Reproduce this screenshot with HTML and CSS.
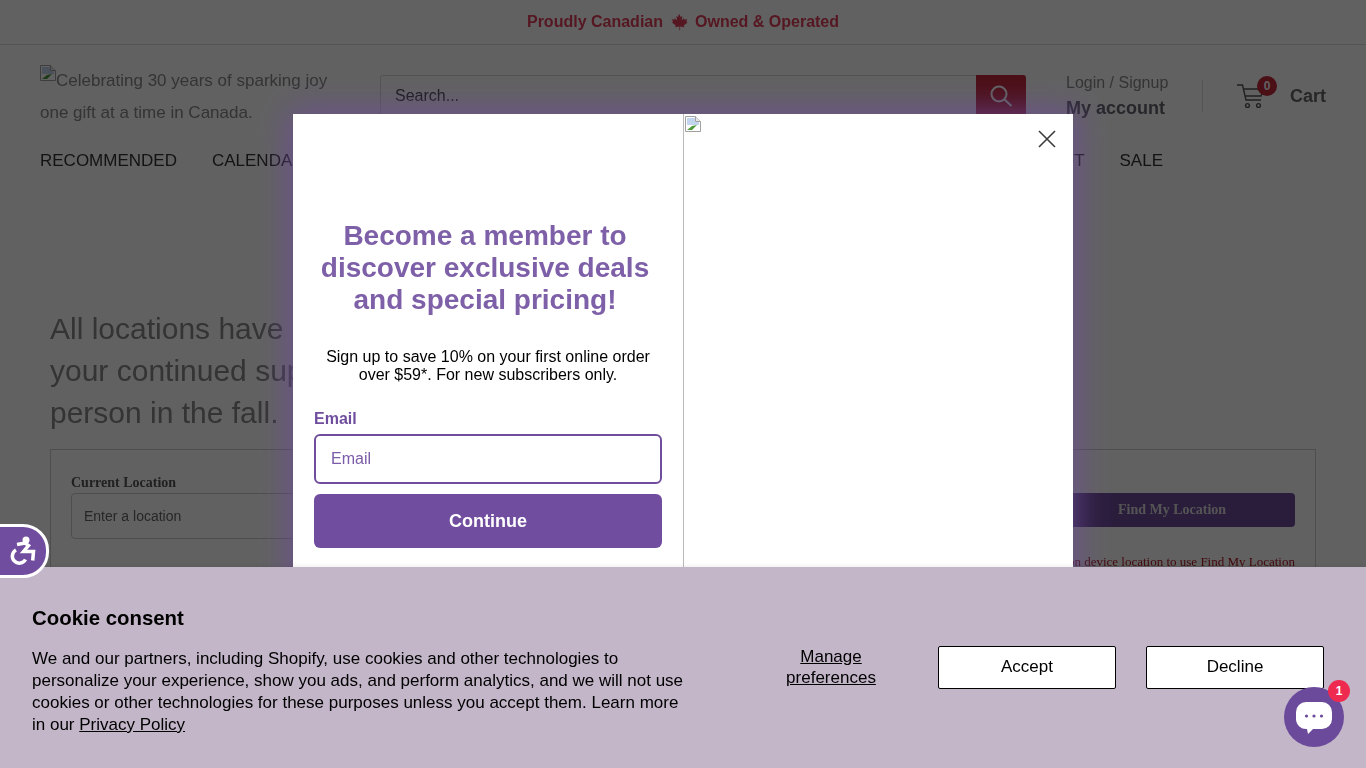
FILE: index.html
```html
<!DOCTYPE html>
<html lang="en">
<head>
    <meta charset="UTF-8">
    <title>Store</title>
    <link rel="stylesheet" href="styles.css">
</head>
<body>

<div class="page">
    <div class="announcement">
        <span>Proudly Canadian</span>
        <svg class="leaf" viewBox="0 0 24 24"><path d="M12 1l2.200 4.200 2.300-1.100-.9 5.400 3-2.600.8 2 3.600-.6-1.200 3.500 1.600.9-5 4 .7 2.200-5.700-.8.2 4.900h-1.200l.2-4.900-5.700.8.7-2.200-5-4 1.600-.9L2 8.300l3.600.6.8-2 3 2.600-.9-5.400 2.300 1.100z"/></svg>
        <span>Owned &amp; Operated</span>
    </div>

    <header class="header">
        <a class="logo"><svg class="broken" viewBox="0 0 16 16"><use href="#broken-img"/></svg>Celebrating 30 years of sparking joy one gift at a time in Canada.</a>
        <div class="search">
            <span class="search-text">Search...</span>
            <span class="search-btn">
                <svg viewBox="0 0 24 24" width="24" height="24"><circle cx="10" cy="10" r="7.500"/><path d="M15.500 15.500l7 6.500"/></svg>
            </span>
        </div>
        <div class="account">
            <span class="login">Login / Signup</span>
            <span class="my-account">My account</span>
        </div>
        <div class="cart">
            <div class="cart-icon">
                <svg viewBox="0 0 28 26" width="28" height="26"><path d="M0 2h5.500l3.500 15h15M6.500 6h20l-2.500 7H8"/><circle cx="10.500" cy="22.500" r="1.900"/><circle cx="21.500" cy="22.500" r="1.900"/></svg>
                <span class="cart-count">0</span>
            </div>
            <span class="cart-label">Cart</span>
        </div>
    </header>

    <nav class="nav">
        <a>RECOMMENDED</a>
        <a>CALENDARS</a>
        <a class="nav-right">GIFT</a>
        <a>SALE</a>
    </nav>

    <main class="content">
        <h2 class="notice">All locations have reopened. Thank you for<br>your continued support. We hope to see you in<br>person in the fall.</h2>
        <div class="locator">
            <label class="locator-label">Current Location</label>
            <span></span>
            <div class="locator-input">Enter a location</div>
            <div class="locator-btn">Find My Location</div>
            <p class="locator-hint">Turn on device location to use Find My Location</p>
        </div>
    </main>
</div>

<div class="overlay"></div>

<div class="modal">
    <div class="modal-form">
        <h1 class="modal-title">Become a member to discover exclusive deals and special pricing!</h1>
        <p class="modal-sub">Sign up to save 10% on your first online order over $59*. For new subscribers only.</p>
        <label class="modal-label">Email</label>
        <div class="modal-input">Email</div>
        <div class="modal-btn">Continue</div>
    </div>
    <div class="modal-image">
        <svg class="broken" viewBox="0 0 16 16"><use href="#broken-img"/></svg>
        <svg class="modal-close" viewBox="0 0 18 18" width="18" height="18"><path d="M1 1l16 16M17 1L1 17"/></svg>
    </div>
</div>

<div class="a11y">
    <svg viewBox="0 0 32 32" width="32" height="32">
        <circle cx="17" cy="5" r="3.500"/>
        <path class="a11y-line" d="M8 9.500l8-1.500 3.500 2.500-5 6h10l-.8 9"/>
        <path class="a11y-line" d="M7 15a7 7 0 1 0 9.500 9.500"/>
    </svg>
</div>

<section class="cookie">
    <div class="cookie-text">
        <h3>Cookie consent</h3>
        <p>We and our partners, including Shopify, use cookies and other technologies to personalize your experience, show you ads, and perform analytics, and we will not use cookies or other technologies for these purposes unless you accept them. Learn more in our <u>Privacy Policy</u></p>
    </div>
    <div class="cookie-actions">
        <a class="manage">Manage preferences</a>
        <button>Accept</button>
        <button>Decline</button>
    </div>
</section>

<div class="chat">
    <svg viewBox="0 0 36 36" width="36" height="36"><path d="M10 3h16a10 10 0 0 1 10 10v7a10 10 0 0 1-10 10H17l-5 5-1-5a10 10 0 0 1-11-10v-7A10 10 0 0 1 10 3z"/><circle class="dot" cx="10.500" cy="17" r="1.600"/><circle class="dot" cx="18" cy="17" r="1.600"/><circle class="dot" cx="25.500" cy="17" r="1.600"/></svg>
    <span class="chat-badge">1</span>
</div>

<svg class="defs" width="0" height="0">
    <symbol id="broken-img" viewBox="0 0 16 16">
        <path d="M.5.500h10l5 5v10H.500z" fill="#fff" stroke="#a0a0a0"/>
        <path d="M2 2h8v4h4v3L2 9z" fill="#c3d5ee"/>
        <path d="M2 14l5-4 5-1-5 5z" fill="#4f9a3c"/>
        <path d="M10.500.500v5h5" fill="#e8e8e8" stroke="#a0a0a0"/>
    </symbol>
</svg>

</body>
</html>
```

FILE: styles.css
```css
* {
    box-sizing: border-box;
}
body {
    margin: 0;
    height: 768px;
    overflow: hidden;
    background: #fff;
    font-family: "Liberation Sans", Arial, sans-serif;
    color: #666;
}
.page {
    will-change: opacity;
}
.overlay {
    position: fixed;
    top: 0;
    right: 0;
    bottom: 0;
    left: 0;
    z-index: 5;
    background: rgba(0, 0, 0, 0.62);
}
.announcement {
    display: flex;
    justify-content: center;
    align-items: center;
    gap: 7px;
    height: 45px;
    border-bottom: 1px solid #ddd;
    color: #e0405a;
    font-size: 16px;
    font-weight: bold;
}
.leaf {
    width: 18px;
    height: 18px;
    fill: #e0405a;
}
.header {
    display: flex;
    padding: 20px 40px 0;
    height: 101px;
}
.logo {
    flex: none;
    width: 340px;
    padding-right: 30px;
    font-size: 17px;
    line-height: 32px;
    color: #888;
}
.broken {
    width: 16px;
    height: 16px;
    vertical-align: 5px;
}
.search {
    flex: none;
    display: flex;
    justify-content: space-between;
    align-items: center;
    width: 646px;
    height: 42px;
    margin-top: 10px;
    border: 1px solid #d8d8d8;
    border-right: 0;
    border-radius: 3px;
    font-size: 16px;
    color: #444;
}
.search-text {
    padding-left: 14px;
}
.search-btn {
    display: flex;
    justify-content: center;
    align-items: center;
    width: 50px;
    height: 42px;
    background: #c4283a;
    border-radius: 0 3px 3px 0;
}
.search-btn svg {
    fill: none;
    stroke: #fff;
    stroke-width: 2;
}
.account {
    flex: none;
    display: flex;
    flex-direction: column;
    width: 136px;
    margin-left: 40px;
    padding-top: 8px;
}
.login {
    font-size: 16px;
    line-height: 20px;
    color: #888;
}
.my-account {
    font-size: 18px;
    font-weight: bold;
    line-height: 30px;
    color: #666672;
}
.cart {
    display: flex;
    align-items: center;
    gap: 26px;
    height: 32px;
    margin-top: 15px;
    padding-left: 34px;
    border-left: 1px solid #ddd;
}
.cart-icon {
    position: relative;
    width: 27px;
    height: 26px;
}
.cart-icon svg {
    fill: none;
    stroke: #555;
    stroke-width: 1.400;
}
.cart-count {
    position: absolute;
    top: -7px;
    left: 20px;
    width: 20px;
    height: 20px;
    border-radius: 50%;
    background: #c4283a;
    color: #fff;
    font-size: 12px;
    font-weight: bold;
    line-height: 20px;
    text-align: center;
}
.cart-label {
    font-size: 18px;
    font-weight: bold;
}
.nav {
    display: flex;
    gap: 35px;
    width: 1123px;
    margin-left: 40px;
    font-size: 17px;
    line-height: 30px;
    color: #333;
}
.nav-right {
    margin-left: auto;
}
.content {
    padding: 132px 50px 0;
}
.notice {
    margin: 0 0 15px;
    font-size: 30px;
    font-weight: normal;
    line-height: 42px;
    color: #888;
}
.locator {
    display: grid;
    grid-template-columns: 1fr 246px;
    grid-template-rows: 19px 46px auto;
    column-gap: 20px;
    row-gap: 1px;
    height: 200px;
    padding: 23px 20px;
    border: 1px solid #ccc;
    font-family: "Liberation Serif", "Times New Roman", serif;
}
.locator-label {
    font-size: 14px;
    font-weight: bold;
    line-height: 19px;
    color: #555;
}
.locator-input {
    height: 46px;
    padding: 0 12px;
    border: 1px solid #ccc;
    border-radius: 4px;
    font-family: "Liberation Sans", Arial, sans-serif;
    font-size: 14px;
    line-height: 44px;
    color: #666;
}
.locator-btn {
    height: 34px;
    background: #704d9f;
    border-radius: 4px;
    color: #ddd;
    font-size: 14px;
    font-weight: bold;
    line-height: 34px;
    text-align: center;
}
.locator-hint {
    grid-column: 1 / 3;
    margin: 15px 0 0;
    color: #b01c28;
    font-size: 13px;
    line-height: 14px;
    text-align: right;
}

/* popup */
.modal {
    position: fixed;
    top: 114px;
    left: 293px;
    z-index: 10;
    display: flex;
    width: 780px;
    height: 540px;
    background: #fff;
    box-shadow: 0 0 30px 4px rgba(112, 77, 158, 0.75);
}
.modal-form {
    width: 391px;
    padding: 106px 21px 0;
    border-right: 1px solid #bbb;
}
.modal-title {
    margin: 0 6px 32px 0;
    color: #7e60a8;
    font-size: 28px;
    line-height: 32px;
    text-align: center;
}
.modal-sub {
    margin: 0 0 26px;
    color: #000;
    font-size: 16px;
    line-height: 18px;
    text-align: center;
}
.modal-label {
    display: block;
    margin-bottom: 6px;
    color: #6f4e9e;
    font-size: 16px;
    font-weight: bold;
    line-height: 18px;
}
.modal-input {
    height: 50px;
    padding-left: 15px;
    border: 2px solid #6f4e9e;
    border-radius: 6px;
    color: #7a5ca8;
    font-size: 16px;
    line-height: 46px;
}
.modal-btn {
    height: 54px;
    margin-top: 10px;
    background: #704d9f;
    border-radius: 6px;
    color: #fff;
    font-size: 18px;
    font-weight: bold;
    line-height: 54px;
    text-align: center;
}
.modal-image {
    position: relative;
    flex: 1;
    padding-left: 1px;
    padding-top: 2px;
}
.modal-image .broken {
    vertical-align: top;
}
.modal-close {
    position: absolute;
    top: 16px;
    right: 17px;
    fill: none;
    stroke: #3a3a3a;
    stroke-width: 1.600;
}

/* accessibility tab */
.a11y {
    position: fixed;
    top: 524px;
    left: -6px;
    z-index: 20;
    display: flex;
    justify-content: center;
    align-items: center;
    width: 55px;
    height: 54px;
    padding-left: 6px;
    background: #704d9f;
    border: 3px solid #fff;
    border-radius: 0 26px 26px 0;
}
.a11y svg {
    fill: #fff;
}
.a11y-line {
    fill: none;
    stroke: #fff;
    stroke-width: 3.500;
}

/* cookie banner */
.cookie {
    position: fixed;
    left: 0;
    right: 0;
    bottom: 0;
    z-index: 15;
    display: flex;
    justify-content: space-between;
    height: 201px;
    padding: 38px 42px 0 32px;
    background: #c3b6c9;
    box-shadow: 0 0 5px rgba(0, 0, 0, 0.1);
    color: #000;
}
.cookie-text {
    width: 660px;
}
.cookie-text h3 {
    margin: 0 0 17px;
    font-size: 20.4px;
    line-height: 26px;
}
.cookie-text p {
    margin: 0;
    font-size: 17px;
    line-height: 22px;
}
.cookie-actions {
    display: flex;
    align-items: center;
    gap: 30px;
    height: 43px;
    margin-top: 41px;
}
.manage {
    width: 132px;
    margin: 0 11px 2px 0;
    font-size: 17px;
    line-height: 21px;
    text-align: center;
    text-decoration: underline;
}
.cookie-actions button {
    width: 178px;
    height: 43px;
    padding: 0 0 2px;
    background: #fff;
    border: 1px solid #000;
    border-radius: 2px;
    font-family: inherit;
    font-size: 17px;
    color: #000;
}

/* chat */
.chat {
    position: fixed;
    left: 1284px;
    top: 687px;
    z-index: 30;
    display: flex;
    justify-content: center;
    align-items: center;
    width: 60px;
    height: 60px;
    background: #6b4a9b;
    border-radius: 50%;
}
.chat svg {
    fill: #fff;
}
.chat .dot {
    fill: #6b4a9b;
}
.chat-badge {
    position: absolute;
    top: -7px;
    right: -6px;
    width: 22px;
    height: 22px;
    background: #ee2a50;
    border-radius: 50%;
    color: #fff;
    font-size: 12px;
    font-weight: bold;
    line-height: 22px;
    text-align: center;
}
.defs {
    position: absolute;
}
```
